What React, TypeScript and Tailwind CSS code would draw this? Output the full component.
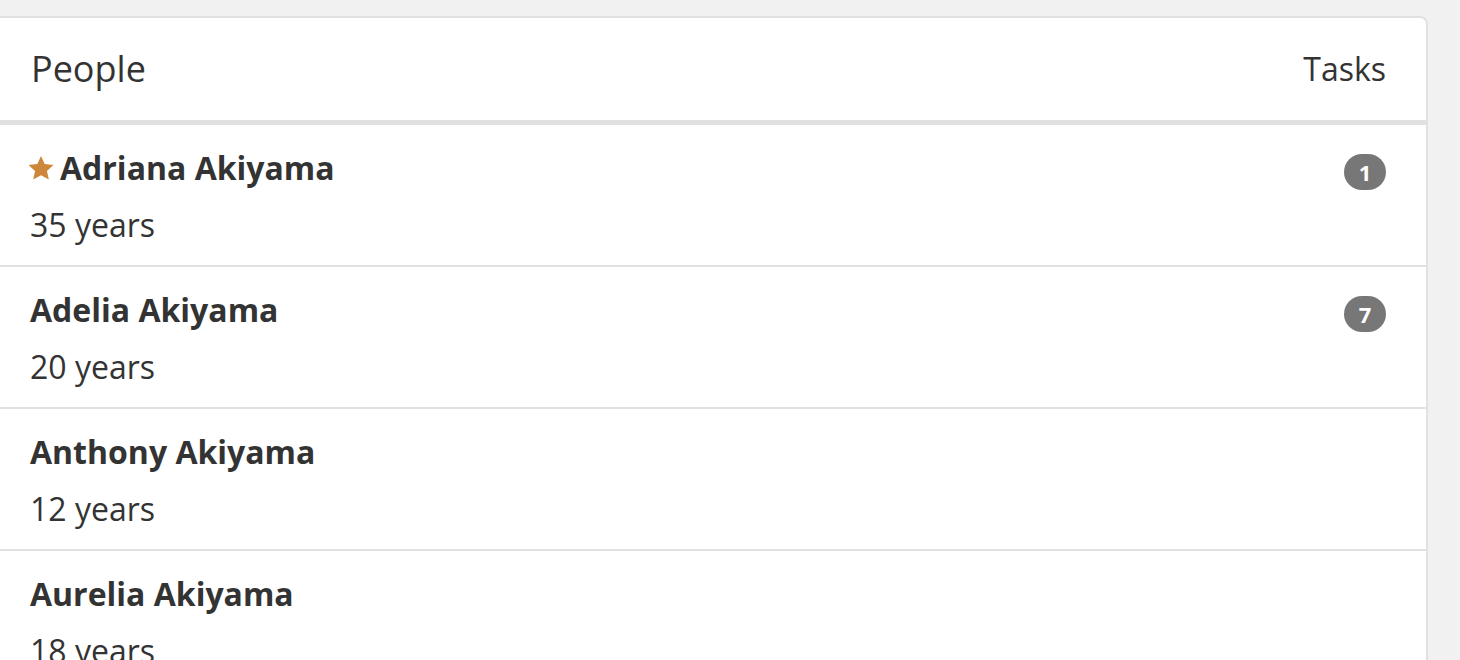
const people = [
  { name: "Adriana Akiyama", age: 35, tasks: 1, star: true },
  { name: "Adelia Akiyama", age: 20, tasks: 7 },
  { name: "Anthony Akiyama", age: 12 },
  { name: "Aurelia Akiyama", age: 18 },
];

function Star() {
  return (
    <svg viewBox="0 0 24 24" className="-ml-[2px] mr-[6px] size-[26px] shrink-0" aria-hidden>
      <path
        fill="#cd873a"
        d="M12 1l3.4 7.3 8.1.9-6 5.5 1.7 8L12 18.7l-7.2 4 1.7-8-6-5.5 8.1-.9z"
      />
    </svg>
  );
}

export default function App() {
  return (
    <div className="h-[660px] overflow-hidden bg-[#f1f1f1] pt-4 font-['Open_Sans',sans-serif] text-[#333]">
      <div className="-ml-2 mr-[32px] rounded-tr-lg border-2 border-[#e1e1e1] bg-white">
        <div className="flex h-[107px] items-center justify-between border-b-[5px] border-[#e1e1e1] pr-[40px] pl-[37px]">
          <span className="text-[36px]">People</span>
          <span className="text-[32px]">Tasks</span>
        </div>
        {people.map((p) => (
          <div
            key={p.name}
            className="flex h-[142px] items-start justify-between border-b-2 border-[#e1e1e1] pl-[36px] pr-[40px]"
          >
            <div className="pt-[23px]">
              <div className="flex h-10 items-center text-[32px] font-bold leading-10">
                {p.star && <Star />}
                {p.name}
              </div>
              <div className="mt-[17px] text-[32px] leading-10">{p.age} years</div>
            </div>
            {p.tasks && (
              <div className="mt-[29px] flex h-9 w-[42px] items-center justify-center rounded-full bg-[#777] text-[22px] font-bold text-white">
                {p.tasks}
              </div>
            )}
          </div>
        ))}
      </div>
    </div>
  );
}
